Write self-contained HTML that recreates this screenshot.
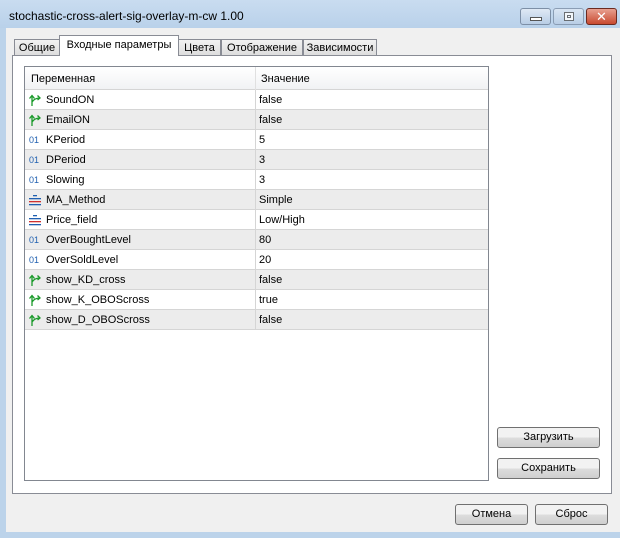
<!DOCTYPE html>
<html><head><meta charset="utf-8"><style>
*{margin:0;padding:0;box-sizing:border-box}
body{width:620px;height:538px;overflow:hidden;background:#bcd3ea;font-family:"Liberation Sans","DejaVu Sans",sans-serif;font-size:11px;color:#000;position:relative}
.abs{position:absolute}
#title{left:0;top:0;width:620px;height:28px;background:linear-gradient(#c9dcf0,#b9d1ea)}
#title span{position:absolute;left:9px;top:9px;font-size:12px;color:#000}
.tb{position:absolute;top:8px;height:17px;border:1px solid #7d8fa6;border-radius:3px;background:linear-gradient(#dfe9f5,#b8cde5)}
#client{left:6px;top:28px;width:614px;height:504px;background:#f0f0f0}
.tab{position:absolute;border:1px solid #898c95;border-bottom:none;background:linear-gradient(#f2f2f2,#dcdcdc);font-size:11px;padding-top:2px;text-align:center}
#panel{left:12px;top:55px;width:600px;height:439px;border:1px solid #898c95;background:#fff}
#tbl{left:24px;top:66px;width:465px;height:415px;border:1px solid #828790;background:#fff}
.row{position:absolute;left:0;width:463px;height:20px;border-bottom:1px solid #d5d5d5}
.row .n{position:absolute;left:21px;top:4px}
.row .v{position:absolute;left:234px;top:4px}
.row .d{position:absolute;left:230px;top:0;width:1px;height:20px;background:#d5d5d5}
.g{background:#ececec}
.btn{position:absolute;border:1px solid #707070;border-radius:3px;background:linear-gradient(#f2f2f2 50%,#dddddd 50%,#cfcfcf);text-align:center;font-size:11px;line-height:19px}
.ic{position:absolute;left:3px;top:3px}
</style></head><body>
<div id="title" class="abs"><span>stochastic-cross-alert-sig-overlay-m-cw 1.00</span>
<div class="tb" style="left:520px;width:31px"><div style="position:absolute;left:9px;top:8px;width:12px;height:4px;border:1px solid #555;background:#fff"></div></div>
<div class="tb" style="left:553px;width:31px;opacity:.8"><div style="position:absolute;left:10px;top:3px;width:10px;height:9px;border:1px solid #555;background:#fff"><div style="margin:2px;height:3px;border:1px solid #555"></div></div></div>
<div class="tb" style="left:586px;width:31px;background:linear-gradient(#e8a090,#c84a30);border-color:#6b2a20;color:#fff;font-weight:bold;font-size:13px;text-align:center;line-height:15px">✕</div>
</div>
<div id="client" class="abs"></div>
<div class="tab" style="left:14px;top:39px;width:46px;height:17px">Общие</div>
<div class="tab" style="left:178px;top:39px;width:43px;height:17px">Цвета</div>
<div class="tab" style="left:221px;top:39px;width:82px;height:17px">Отображение</div>
<div class="tab" style="left:303px;top:39px;width:74px;height:17px">Зависимости</div>
<div id="panel" class="abs"></div>
<div class="tab" style="left:59px;top:35px;width:120px;height:21px;background:#fff;z-index:2;padding-top:3px">Входные параметры</div>
<div id="tbl" class="abs">
<div class="abs" style="left:0;top:0;width:463px;height:23px;background:linear-gradient(#fff,#f1f2f4);border-bottom:1px solid #d5d5d5"><span class="abs" style="left:6px;top:6px">Переменная</span><span class="abs" style="left:236px;top:6px">Значение</span><div class="abs" style="left:230px;top:0;width:1px;height:23px;background:#e0e0e0"></div></div>
</div>
<div id="rows" class="abs" style="left:25px;top:90px">
</div>
<script>
var R=[["b","SoundON","false"],["b","EmailON","false"],["i","KPeriod","5"],["i","DPeriod","3"],["i","Slowing","3"],["e","MA_Method","Simple"],["e","Price_field","Low/High"],["i","OverBoughtLevel","80"],["i","OverSoldLevel","20"],["b","show_KD_cross","false"],["b","show_K_OBOScross","true"],["b","show_D_OBOScross","false"]];
var ic={b:'<svg class="ic" width="14" height="14" viewBox="0 0 14 14"><path d="M4 13V3M1.5 5.5L4 2.5 6.5 5.5M4 9c2-3 5-4 8-4M9.5 2.5L12 5 9.5 7" fill="none" stroke="#1a9a2a" stroke-width="1.3"/></svg>',
i:'<span class="ic" style="top:5px;left:4px;color:#2060b0;font-size:9px">01</span>',
e:'<svg class="ic" width="14" height="14" viewBox="0 0 14 14"><rect x="5" y="2" width="4" height="1.3" fill="#2060b0"/><rect x="1" y="5" width="12" height="1.3" fill="#2060b0"/><rect x="1" y="8" width="12" height="1.3" fill="#d03030"/><rect x="1" y="11" width="12" height="1.3" fill="#2060b0"/></svg>'};
var h="";R.forEach(function(r,i){h+='<div class="row'+(i%2?' g':'')+'" style="top:'+(i*20)+'px">'+ic[r[0]]+'<span class="n">'+r[1]+'</span><div class="d"></div><span class="v">'+r[2]+'</span></div>'});
document.getElementById("rows").innerHTML=h;
</script>
<div class="btn" style="left:497px;top:427px;width:103px;height:21px">Загрузить</div>
<div class="btn" style="left:497px;top:458px;width:103px;height:21px">Сохранить</div>
<div class="btn" style="left:455px;top:504px;width:73px;height:21px">Отмена</div>
<div class="btn" style="left:535px;top:504px;width:73px;height:21px">Сброс</div>
</body></html>
